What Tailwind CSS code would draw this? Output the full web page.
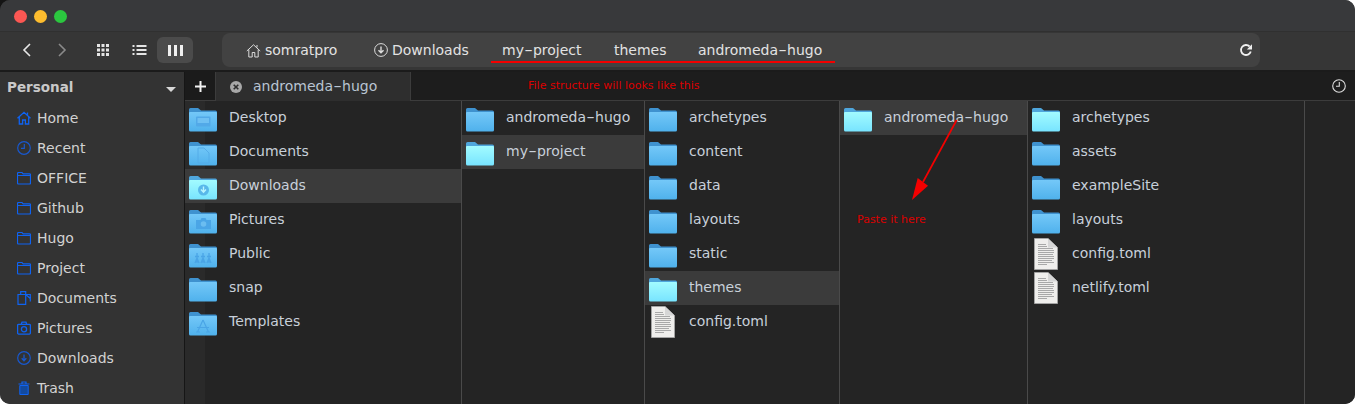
<!DOCTYPE html>
<html lang="en">
<head>
  <meta charset="UTF-8">
  <title>Files - andromeda-hugo</title>
  <script src="https://cdn.jsdelivr.net/npm/@tailwindcss/browser@4"></script>
</head>
<body class="relative bg-white font-['DejaVu_Sans',sans-serif] text-[14px] overflow-hidden">
  <!-- shared icons -->
  <svg width="0" height="0" class="absolute">
    <defs>
      <linearGradient id="blue" x1="0" y1="0" x2="0" y2="1"><stop offset="0" stop-color="#74c8f8"/><stop offset="1" stop-color="#4fb1ec"/></linearGradient>
      <linearGradient id="cyan" x1="0" y1="0" x2="0" y2="1"><stop offset="0" stop-color="#a2fbff"/><stop offset="1" stop-color="#78e4ff"/></linearGradient>
      <symbol id="folder" viewBox="0 0 28 24">
        <path d="M0 1.500A1.500 1.500 0 0 1 1.500 0H9l3 2.500h14.500A1.500 1.500 0 0 1 28 4v6H0z" fill="#3f92cf"/>
        <path d="M0 5A1 1 0 0 1 1 4h26a1 1 0 0 1 1 1v17a1.500 1.500 0 0 1-1.500 1.500h-25A1.500 1.500 0 0 1 0 22z" fill="url(#blue)"/>
      </symbol>
      <symbol id="folder-sel" viewBox="0 0 28 24">
        <path d="M0 1.500A1.500 1.500 0 0 1 1.500 0H9l3 2.500h14.500A1.500 1.500 0 0 1 28 4v6H0z" fill="#4fa6dc"/>
        <path d="M0 5A1 1 0 0 1 1 4h26a1 1 0 0 1 1 1v17a1.500 1.500 0 0 1-1.500 1.500h-25A1.500 1.500 0 0 1 0 22z" fill="url(#cyan)"/>
      </symbol>
      <symbol id="doc" viewBox="0 0 24 32">
        <path d="M.5.5h13.500l9.500 9V31.500H.5z" fill="#efeeec" stroke="#a3a3a3"/>
        <path d="M14 .5v9h9.500z" fill="#d6d6d6"/>
        <path d="M4 6.500h8M4 8.500h9M4 10.500h15M4 12.500h16M4 14.500h16M4 16.500h15M4 18.500h16M4 20.500h16M4 22.500h14M4 24.500h16M4 26.500h9" stroke="#a8a8a8" stroke-width="1"/>
      </symbol>
      <symbol id="side-folder" viewBox="0 0 14 14">
        <path d="M.5 2.500a1 1 0 0 1 1-1H5l1.200 1.300h6.300a1 1 0 0 1 1 1v8.200a1 1 0 0 1-1 1h-11a1 1 0 0 1-1-1zM.5 4.500h13" fill="none" stroke="#0f63f2" stroke-width="1.200"/>
      </symbol>
    </defs>
  </svg>

  <!-- dark notch behind the top left corner -->
  <div class="absolute left-0 top-0 w-[12px] h-[12px] bg-[#141414]"></div>

  <div class="relative w-[1355px] h-[404px] flex flex-col bg-[#333333] rounded-t-[10px] rounded-b-[10px] overflow-hidden text-[#d2d2d2]">
    <!-- title bar -->
    <div class="h-[32px] shrink-0 bg-[#38393b] border-b border-[#303030] flex items-center gap-[7px] pl-[14px] pt-[2px]">
      <span class="w-[13px] h-[13px] rounded-full bg-[#fc5753]"></span>
      <span class="w-[13px] h-[13px] rounded-full bg-[#fdbc2e]"></span>
      <span class="w-[13px] h-[13px] rounded-full bg-[#2bc63f]"></span>
    </div>

    <!-- toolbar -->
    <div class="h-[40px] shrink-0 bg-[#363636] border-b-2 border-[#1b1b1b] pb-[2px] flex items-center relative">
      <div class="w-[222px] h-full shrink-0 flex items-center relative">
        <svg class="ml-[22px]" width="10" height="14" viewBox="0 0 10 14"><path d="M8 1 2 7l6 6" fill="none" stroke="#e8e8e8" stroke-width="1.600"/></svg>
        <svg class="ml-[25px]" width="10" height="14" viewBox="0 0 10 14"><path d="m2 1 6 6-6 6" fill="none" stroke="#8a8a8a" stroke-width="1.600"/></svg>
        <svg class="ml-[29px]" width="14" height="14" viewBox="0 0 14 14" fill="#e4e4e4"><rect x="1" y="1" width="3" height="3"/><rect x="5.500" y="1" width="3" height="3"/><rect x="10" y="1" width="3" height="3"/><rect x="1" y="5.500" width="3" height="3"/><rect x="5.500" y="5.500" width="3" height="3"/><rect x="10" y="5.500" width="3" height="3"/><rect x="1" y="10" width="3" height="3"/><rect x="5.500" y="10" width="3" height="3"/><rect x="10" y="10" width="3" height="3"/></svg>
        <svg class="ml-[22px]" width="15" height="14" viewBox="0 0 15 14" fill="#e4e4e4"><rect x="0.500" y="2" width="2" height="2"/><rect x="4.500" y="2" width="10" height="2"/><rect x="0.500" y="6" width="2" height="2"/><rect x="4.500" y="6" width="10" height="2"/><rect x="0.500" y="10" width="2" height="2"/><rect x="4.500" y="10" width="10" height="2"/></svg>
        <div class="ml-[10px] w-[36px] h-[26px] rounded-md bg-[#4b4b4b] flex items-center justify-center gap-[3px]">
          <span class="w-[3px] h-[11px] bg-[#f0f0f0]"></span><span class="w-[3px] h-[11px] bg-[#f0f0f0]"></span><span class="w-[3px] h-[11px] bg-[#f0f0f0]"></span>
        </div>
      </div>

      <!-- path bar -->
      <div class="w-[1038px] h-[34px] rounded-lg bg-[#424242] flex items-center text-[#e2e2e2] relative">
        <svg class="ml-[24px]" width="15" height="15" viewBox="0 0 15 15" fill="none" stroke="#dcdcdc"><path d="M.8 8 7.500 1.800 14.200 8M2.800 6.500V14h3.400V9.500h2.600V14h3.400V6.500M11 2v2.500"/></svg>
        <span class="ml-[4px] w-[109px]">somratpro</span>
        <svg width="14" height="14" viewBox="0 0 14 14" fill="none" stroke="#dcdcdc"><circle cx="7" cy="7" r="6.400"/><path d="M7 3.500v6M4.500 7.200 7 9.800l2.500-2.600" stroke-width="1.400"/></svg>
        <span class="ml-[4px] w-[110px]">Downloads</span>
        <span class="w-[112px]">my<span class="inline-block w-[9px] text-center scale-x-[1.7]">-</span>project</span>
        <span class="w-[84px]">themes</span>
        <span>andromeda<span class="inline-block w-[9px] text-center scale-x-[1.7]">-</span>hugo</span>
        <svg class="absolute right-[7px] top-[10px]" width="14" height="14" viewBox="0 0 14 14" fill="none"><path d="M11.800 8.500A5 5 0 1 1 10.600 3.500" stroke="#f0f0f0" stroke-width="1.800"/><path d="M13 1.200V6.500H7.800z" fill="#f0f0f0"/></svg>
        <!-- red underline from the annotation -->
        <span class="absolute left-[269px] top-[28px] w-[344px] h-[2px] bg-[#f40000]"></span>
      </div>
    </div>

    <div class="flex-1 flex min-h-0">
      <!-- sidebar -->
      <aside class="w-[185px] shrink-0 bg-[#333333] border-r border-[#161616]">
        <div class="h-[30px] flex items-center justify-between pl-[7px] pr-[8px] pt-[1px] font-bold text-[13.5px] text-[#c9c9c9]">
          <span>Personal</span>
          <span class="w-0 h-0 mt-[3px] border-x-[5px] border-x-transparent border-t-[5px] border-t-[#d8d8d8]"></span>
        </div>
        <ul class="pt-[1px]">
          <li class="h-[30px] flex items-center pl-[17px] gap-[6px]">
            <svg width="14" height="14" viewBox="0 0 14 14" fill="none" stroke="#0f63f2" stroke-width="1.300"><path d="M.5 7.200 7 1.300l6.500 5.900M2.300 5.800V13h3.300V9h2.800v4h3.300V5.800M10.500 1.500v2.300"/></svg>
            <span>Home</span>
          </li>
          <li class="h-[30px] flex items-center pl-[17px] gap-[6px]">
            <svg width="14" height="14" viewBox="0 0 14 14" fill="none" stroke="#1858cf" stroke-width="1.200"><circle cx="7" cy="7" r="6.300"/><path d="M7.300 3v4.300H4"/></svg>
            <span>Recent</span>
          </li>
          <li class="h-[30px] flex items-center pl-[17px] gap-[6px]"><svg width="14" height="14"><use href="#side-folder"/></svg><span>OFFICE</span></li>
          <li class="h-[30px] flex items-center pl-[17px] gap-[6px]"><svg width="14" height="14"><use href="#side-folder"/></svg><span>Github</span></li>
          <li class="h-[30px] flex items-center pl-[17px] gap-[6px]"><svg width="14" height="14"><use href="#side-folder"/></svg><span>Hugo</span></li>
          <li class="h-[30px] flex items-center pl-[17px] gap-[6px]"><svg width="14" height="14"><use href="#side-folder"/></svg><span>Project</span></li>
          <li class="h-[30px] flex items-center pl-[17px] gap-[6px]">
            <svg width="14" height="14" viewBox="0 0 14 14" fill="none" stroke="#0f63f2" stroke-width="1.200"><path d="M3.700 3.500V.7h5v2.800h4.600v7M3.700 3.500h5v9.800H1V3.500zM8.700 3.500l4.600 4"/></svg>
            <span>Documents</span>
          </li>
          <li class="h-[30px] flex items-center pl-[17px] gap-[6px]">
            <svg width="14" height="14" viewBox="0 0 14 14" fill="none" stroke="#0f63f2" stroke-width="1.300"><rect x=".6" y="3.300" width="12.800" height="9.800" rx="1"/><circle cx="7" cy="8.200" r="2.600"/><path d="M4.300 3.300 5 1.200h4l.7 2.100"/></svg>
            <span>Pictures</span>
          </li>
          <li class="h-[30px] flex items-center pl-[17px] gap-[6px]">
            <svg width="14" height="14" viewBox="0 0 14 14" fill="none" stroke="#1858cf" stroke-width="1.200"><circle cx="7" cy="7" r="6.300"/><path d="M7 3.500v6M4.700 7.300 7 9.700l2.300-2.400" stroke-width="1.300"/></svg>
            <span>Downloads</span>
          </li>
          <li class="h-[30px] flex items-center pl-[17px] gap-[6px]">
            <svg width="14" height="14" viewBox="0 0 14 14"><path d="M1.500 3h11M5 3V1h4v2" fill="none" stroke="#0f63f2" stroke-width="1.200"/><path d="M2.800 4.500h8.400V13.500H2.800z" fill="#134a9e" stroke="#0f63f2"/></svg>
            <span>Trash</span>
          </li>
        </ul>
      </aside>

      <div class="flex-1 flex flex-col min-w-0">
        <!-- tab bar -->
        <div class="h-[29px] shrink-0 flex bg-[#1d1d1d] border-b border-[#3c3c3c] relative">
          <div class="w-[30px] flex items-center justify-center bg-[#1b1b1b]">
            <svg width="11" height="11" viewBox="0 0 11 11" fill="#f2f2f2"><rect x="4.500" width="2" height="11"/><rect y="4.500" width="11" height="2"/></svg>
          </div>
          <div class="w-[196px] -mb-[1px] bg-[#2e2e2e] border-x border-[#3c3c3c] flex items-center pl-[13px] text-[#b9c4d2]">
            <svg width="14" height="14" viewBox="0 0 14 14"><circle cx="7" cy="7" r="6" fill="#a8a8a8"/><path d="m4.700 4.700 4.600 4.600M9.300 4.700l-4.600 4.600" stroke="#2e2e2e" stroke-width="1.600"/></svg>
            <span class="ml-[10px]">andromeda<span class="inline-block w-[9px] text-center scale-x-[1.7]">-</span>hugo</span>
          </div>
          <span class="ml-[117px] pt-[1px] self-center text-[11px] text-[#dc0000]">File structure will looks like this</span>
          <svg class="absolute right-[9px] top-[7px]" width="14" height="14" viewBox="0 0 14 14" fill="none" stroke="#dedede" stroke-width="1.100"><circle cx="7" cy="7" r="6.300"/><path d="M7.300 3v4.300H4"/></svg>
        </div>

        <!-- miller columns -->
        <div class="flex-1 flex bg-[#242424] min-h-0 text-[#c8d0da]">
          <div class="w-[277px] shrink-0 border-r border-[#4a4a4a] bg-[linear-gradient(to_right,#2a2a2a_20px,#242424_20px)]">
            <div class="h-[34px] flex items-center pl-[4px] gap-[12px]">
              <svg width="28" height="24" class="shrink-0 mt-[4px]"><use href="#folder"/><rect x="7" y="8.500" width="14.500" height="10" rx="1" fill="#52a9e8"/><rect x="8.500" y="10" width="11.500" height="5" fill="#6fc0f3"/></svg><span class="-mt-[1px]">Desktop</span>
            </div>
            <div class="h-[34px] flex items-center pl-[4px] gap-[12px]">
              <svg width="28" height="24" class="shrink-0 mt-[4px]"><use href="#folder"/><path d="M9 6h6l5 5v10H9z" fill="none" stroke="#55ace8"/></svg><span class="-mt-[1px]">Documents</span>
            </div>
            <div class="h-[34px] flex items-center pl-[4px] gap-[12px] bg-[#3b3b3b]">
              <svg width="28" height="24" class="shrink-0 mt-[4px]"><use href="#folder-sel"/><circle cx="14.500" cy="14" r="5.500" fill="#58b8ea"/><path d="M14.500 10.500v5M12 13.500l2.500 2.800 2.500-2.800" fill="none" stroke="#b8f5ff" stroke-width="1.400"/></svg><span class="-mt-[1px]">Downloads</span>
            </div>
            <div class="h-[34px] flex items-center pl-[4px] gap-[12px]">
              <svg width="28" height="24" class="shrink-0 mt-[4px]"><use href="#folder"/><path d="M7 10h4.500l1-2h4l1 2H22v9H7z" fill="#4aa5e6"/><circle cx="14.500" cy="14" r="2.800" fill="#6bbdf0"/></svg><span class="-mt-[1px]">Pictures</span>
            </div>
            <div class="h-[34px] flex items-center pl-[4px] gap-[12px]">
              <svg width="28" height="24" class="shrink-0 mt-[4px]"><use href="#folder"/><path d="M8 9v10M6 12.500h4M8 14l-2 5M8 14l2 5M14 9v10M12 12.500h4M14 14l-2 5M14 14l2 5M20 9v10M18 12.500h4M20 14l-2 5M20 14l2 5" stroke="#4aa5e6" stroke-width="1.300" fill="none"/></svg><span class="-mt-[1px]">Public</span>
            </div>
            <div class="h-[34px] flex items-center pl-[4px] gap-[12px]">
              <svg width="28" height="24" class="shrink-0 mt-[4px]"><use href="#folder"/></svg><span class="-mt-[1px]">snap</span>
            </div>
            <div class="h-[34px] flex items-center pl-[4px] gap-[12px]">
              <svg width="28" height="24" class="shrink-0 mt-[4px]"><use href="#folder"/><path d="M14 8 8.500 20M14 8 19.500 20M8 15.500h12M7 20h4M17 20h4" stroke="#4aa5e6" stroke-width="1.200" fill="none"/></svg><span class="-mt-[1px]">Templates</span>
            </div>
          </div>

          <div class="w-[183px] shrink-0 border-r border-[#4a4a4a]">
            <div class="h-[34px] flex items-center pl-[4px] gap-[12px]"><svg width="28" height="24" class="shrink-0 mt-[4px]"><use href="#folder"/></svg><span class="-mt-[1px]">andromeda<span class="inline-block w-[9px] text-center scale-x-[1.7]">-</span>hugo</span></div>
            <div class="h-[34px] flex items-center pl-[4px] gap-[12px] bg-[#3b3b3b]"><svg width="28" height="24" class="shrink-0 mt-[4px]"><use href="#folder-sel"/></svg><span class="-mt-[1px]">my<span class="inline-block w-[9px] text-center scale-x-[1.7]">-</span>project</span></div>
          </div>

          <div class="w-[195px] shrink-0 border-r border-[#4a4a4a]">
            <div class="h-[34px] flex items-center pl-[4px] gap-[12px]"><svg width="28" height="24" class="shrink-0 mt-[4px]"><use href="#folder"/></svg><span class="-mt-[1px]">archetypes</span></div>
            <div class="h-[34px] flex items-center pl-[4px] gap-[12px]"><svg width="28" height="24" class="shrink-0 mt-[4px]"><use href="#folder"/></svg><span class="-mt-[1px]">content</span></div>
            <div class="h-[34px] flex items-center pl-[4px] gap-[12px]"><svg width="28" height="24" class="shrink-0 mt-[4px]"><use href="#folder"/></svg><span class="-mt-[1px]">data</span></div>
            <div class="h-[34px] flex items-center pl-[4px] gap-[12px]"><svg width="28" height="24" class="shrink-0 mt-[4px]"><use href="#folder"/></svg><span class="-mt-[1px]">layouts</span></div>
            <div class="h-[34px] flex items-center pl-[4px] gap-[12px]"><svg width="28" height="24" class="shrink-0 mt-[4px]"><use href="#folder"/></svg><span class="-mt-[1px]">static</span></div>
            <div class="h-[34px] flex items-center pl-[4px] gap-[12px] bg-[#3b3b3b]"><svg width="28" height="24" class="shrink-0 mt-[4px]"><use href="#folder-sel"/></svg><span class="-mt-[1px]">themes</span></div>
            <div class="h-[34px] flex items-center pl-[6px] gap-[14px]"><svg width="24" height="32" class="shrink-0"><use href="#doc"/></svg><span class="-mt-[1px]">config.toml</span></div>
          </div>

          <div class="w-[188px] shrink-0 border-r border-[#4a4a4a]">
            <div class="h-[34px] flex items-center pl-[4px] gap-[12px] bg-[#3b3b3b]"><svg width="28" height="24" class="shrink-0 mt-[4px]"><use href="#folder-sel"/></svg><span class="-mt-[1px]">andromeda<span class="inline-block w-[9px] text-center scale-x-[1.7]">-</span>hugo</span></div>
          </div>

          <div class="w-[277px] shrink-0 border-r border-[#4a4a4a]">
            <div class="h-[34px] flex items-center pl-[4px] gap-[12px]"><svg width="28" height="24" class="shrink-0 mt-[4px]"><use href="#folder-sel"/></svg><span class="-mt-[1px]">archetypes</span></div>
            <div class="h-[34px] flex items-center pl-[4px] gap-[12px]"><svg width="28" height="24" class="shrink-0 mt-[4px]"><use href="#folder"/></svg><span class="-mt-[1px]">assets</span></div>
            <div class="h-[34px] flex items-center pl-[4px] gap-[12px]"><svg width="28" height="24" class="shrink-0 mt-[4px]"><use href="#folder"/></svg><span class="-mt-[1px]">exampleSite</span></div>
            <div class="h-[34px] flex items-center pl-[4px] gap-[12px]"><svg width="28" height="24" class="shrink-0 mt-[4px]"><use href="#folder"/></svg><span class="-mt-[1px]">layouts</span></div>
            <div class="h-[34px] flex items-center pl-[6px] gap-[14px]"><svg width="24" height="32" class="shrink-0"><use href="#doc"/></svg><span class="-mt-[1px]">config.toml</span></div>
            <div class="h-[34px] flex items-center pl-[6px] gap-[14px]"><svg width="24" height="32" class="shrink-0"><use href="#doc"/></svg><span class="-mt-[1px]">netlify.toml</span></div>
          </div>
        </div>
      </div>
    </div>

    <!-- annotation drawn over the screenshot -->
    <svg class="absolute left-[905px] top-[118px]" width="60" height="90" viewBox="0 0 60 90">
      <path d="M51.700 2 18 64" stroke="#f40000" stroke-width="1.700" fill="none"/>
      <path d="M7 82 12.700 60 23 67.700z" fill="#f40000"/>
    </svg>
    <span class="absolute left-[857px] top-[212px] text-[11px] text-[#dc0000]">Paste it here</span>
  </div>
</body>
</html>
